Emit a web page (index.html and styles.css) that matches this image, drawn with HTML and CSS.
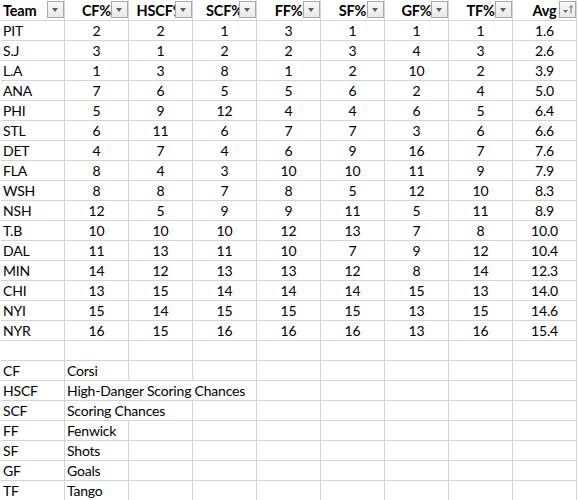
FILE: index.html
```html
<!DOCTYPE html>
<html>
<head>
<meta charset="utf-8">
<link rel="stylesheet" href="styles.css">
</head>
<body>
<div class="sheet">
  <div class="c h l">Team<span class="fb"></span></div>
  <div class="c h">CF%<span class="fb"></span></div>
  <div class="c h">HSCF%<span class="fb"></span></div>
  <div class="c h">SCF%<span class="fb"></span></div>
  <div class="c h">FF%<span class="fb"></span></div>
  <div class="c h">SF%<span class="fb"></span></div>
  <div class="c h">GF%<span class="fb"></span></div>
  <div class="c h">TF%<span class="fb"></span></div>
  <div class="c h">Avg<span class="fb sort"><svg width="15" height="15" viewBox="0 0 15 15"><path d="M3 8h5l-2.5 3z" fill="#6b6b6b"/><path d="M11 3.5v8M9.3 5.5L11 3.5l1.7 2" stroke="#6b6b6b" stroke-width="1" fill="none"/></svg></span></div>

  <div class="c l">PIT</div><div class="c">2</div><div class="c">2</div><div class="c">1</div><div class="c">3</div><div class="c">1</div><div class="c">1</div><div class="c">1</div><div class="c">1.6</div>
  <div class="c l">S.J</div><div class="c">3</div><div class="c">1</div><div class="c">2</div><div class="c">2</div><div class="c">3</div><div class="c">4</div><div class="c">3</div><div class="c">2.6</div>
  <div class="c l">L.A</div><div class="c">1</div><div class="c">3</div><div class="c">8</div><div class="c">1</div><div class="c">2</div><div class="c">10</div><div class="c">2</div><div class="c">3.9</div>
  <div class="c l">ANA</div><div class="c">7</div><div class="c">6</div><div class="c">5</div><div class="c">5</div><div class="c">6</div><div class="c">2</div><div class="c">4</div><div class="c">5.0</div>
  <div class="c l">PHI</div><div class="c">5</div><div class="c">9</div><div class="c">12</div><div class="c">4</div><div class="c">4</div><div class="c">6</div><div class="c">5</div><div class="c">6.4</div>
  <div class="c l">STL</div><div class="c">6</div><div class="c">11</div><div class="c">6</div><div class="c">7</div><div class="c">7</div><div class="c">3</div><div class="c">6</div><div class="c">6.6</div>
  <div class="c l">DET</div><div class="c">4</div><div class="c">7</div><div class="c">4</div><div class="c">6</div><div class="c">9</div><div class="c">16</div><div class="c">7</div><div class="c">7.6</div>
  <div class="c l">FLA</div><div class="c">8</div><div class="c">4</div><div class="c">3</div><div class="c">10</div><div class="c">10</div><div class="c">11</div><div class="c">9</div><div class="c">7.9</div>
  <div class="c l">WSH</div><div class="c">8</div><div class="c">8</div><div class="c">7</div><div class="c">8</div><div class="c">5</div><div class="c">12</div><div class="c">10</div><div class="c">8.3</div>
  <div class="c l">NSH</div><div class="c">12</div><div class="c">5</div><div class="c">9</div><div class="c">9</div><div class="c">11</div><div class="c">5</div><div class="c">11</div><div class="c">8.9</div>
  <div class="c l">T.B</div><div class="c">10</div><div class="c">10</div><div class="c">10</div><div class="c">12</div><div class="c">13</div><div class="c">7</div><div class="c">8</div><div class="c">10.0</div>
  <div class="c l">DAL</div><div class="c">11</div><div class="c">13</div><div class="c">11</div><div class="c">10</div><div class="c">7</div><div class="c">9</div><div class="c">12</div><div class="c">10.4</div>
  <div class="c l">MIN</div><div class="c">14</div><div class="c">12</div><div class="c">13</div><div class="c">13</div><div class="c">12</div><div class="c">8</div><div class="c">14</div><div class="c">12.3</div>
  <div class="c l">CHI</div><div class="c">13</div><div class="c">15</div><div class="c">14</div><div class="c">14</div><div class="c">14</div><div class="c">15</div><div class="c">13</div><div class="c">14.0</div>
  <div class="c l">NYI</div><div class="c">15</div><div class="c">14</div><div class="c">15</div><div class="c">15</div><div class="c">15</div><div class="c">13</div><div class="c">15</div><div class="c">14.6</div>
  <div class="c l">NYR</div><div class="c">16</div><div class="c">15</div><div class="c">16</div><div class="c">16</div><div class="c">16</div><div class="c">13</div><div class="c">16</div><div class="c">15.4</div>

  <div class="c"></div><div class="c"></div><div class="c"></div><div class="c"></div><div class="c"></div><div class="c"></div><div class="c"></div><div class="c"></div><div class="c"></div>

  <div class="c l">CF</div><div class="c l">Corsi</div><div class="c"></div><div class="c"></div><div class="c"></div><div class="c"></div><div class="c"></div><div class="c"></div><div class="c"></div>
  <div class="c l">HSCF</div><div class="c l span3">High-Danger Scoring Chances</div><div class="c"></div><div class="c"></div><div class="c"></div><div class="c"></div><div class="c"></div>
  <div class="c l">SCF</div><div class="c l span2">Scoring Chances</div><div class="c"></div><div class="c"></div><div class="c"></div><div class="c"></div><div class="c"></div><div class="c"></div>
  <div class="c l">FF</div><div class="c l">Fenwick</div><div class="c"></div><div class="c"></div><div class="c"></div><div class="c"></div><div class="c"></div><div class="c"></div><div class="c"></div>
  <div class="c l">SF</div><div class="c l">Shots</div><div class="c"></div><div class="c"></div><div class="c"></div><div class="c"></div><div class="c"></div><div class="c"></div><div class="c"></div>
  <div class="c l">GF</div><div class="c l">Goals</div><div class="c"></div><div class="c"></div><div class="c"></div><div class="c"></div><div class="c"></div><div class="c"></div><div class="c"></div>
  <div class="c l">TF</div><div class="c l">Tango</div><div class="c"></div><div class="c"></div><div class="c"></div><div class="c"></div><div class="c"></div><div class="c"></div><div class="c"></div>
</div>
</body>
</html>
```

FILE: styles.css
```css
html, body {
  margin: 0;
  padding: 0;
  background: #ffffff;
}

body {
  font-family: Lato, "Liberation Sans", sans-serif;
  font-size: 14px;
  letter-spacing: -0.2px;
  color: #000000;
}

.sheet {
  display: grid;
  grid-template-columns: repeat(9, 64px);
  grid-auto-rows: 20px;
  padding: 1px 0 0 1px;
}

.c {
  position: relative;
  box-sizing: border-box;
  border-right: 1px solid #d4d4d4;
  border-bottom: 1px solid #d4d4d4;
  display: flex;
  align-items: flex-end;
  justify-content: center;
  line-height: 16px;
  padding-bottom: 1px;
  white-space: nowrap;
  overflow: hidden;
}

.l {
  justify-content: flex-start;
  padding-left: 2px;
}

.h {
  font-weight: bold;
  font-size: 14.5px;
}

.span2 {
  grid-column: span 2;
}

.span3 {
  grid-column: span 3;
}

.fb {
  position: absolute;
  right: 0;
  top: 0;
  width: 17px;
  height: 17px;
  box-sizing: border-box;
  border: 1px solid #a8a8a8;
  background: linear-gradient(#f8f8f8, #e8e8e8);
}

.fb::after {
  content: "";
  position: absolute;
  left: 4px;
  top: 6px;
  border-left: 3.5px solid transparent;
  border-right: 3.5px solid transparent;
  border-top: 4px solid #5e5e5e;
}

.fb.sort::after {
  display: none;
}

.fb svg {
  display: block;
  margin: 0;
}
```
